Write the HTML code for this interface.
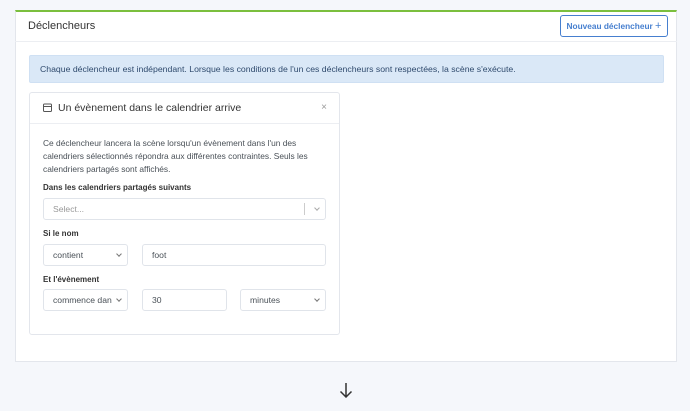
<!DOCTYPE html>
<html><head><style>
*{box-sizing:border-box;margin:0;padding:0}
body{width:690px;height:411px;background:#f5f7fb;font-family:"Liberation Sans",sans-serif;color:#495057;position:relative;overflow:hidden}
.abs{position:absolute}
.card{left:15px;top:10px;width:662px;height:352px;background:#fff;border:1px solid #e3e6ec;border-top:2px solid #7bbf3e}
.hdr{left:-1px;top:0;width:662px;height:30px;border-bottom:1px solid #eceef2}
.btn{left:545px;top:3px;width:108px;height:22px;border:1px solid #467fcf;border-radius:3px;color:#467fcf;font-size:8.3px;font-weight:bold;line-height:20px;text-align:center;white-space:nowrap}
.alert{left:13px;top:43px;width:635px;height:28px;background:#dae8f7;border:1px solid #cfe0f3;border-radius:2px;font-size:8.7px;color:#2f4a6d;line-height:26px;padding-left:10px;white-space:nowrap}
.ic{left:13px;top:80px;width:311px;height:243px;border:1px solid #e3e6ec;border-radius:3px}
.ih{left:0;top:0;width:100%;height:31px;border-bottom:1px solid #eceef2;font-size:10.5px;color:#333;line-height:30px;padding-left:28px}
.p{font-size:8.4px;line-height:13px;color:#495057}
.lbl{font-size:8px;font-weight:bold;color:#333}
.in{border:1px solid #e0e4ea;border-radius:3px;height:22px;font-size:8.6px;line-height:20px;padding-left:9px;color:#495057;background:#fff}
.chev{position:absolute;right:6px;top:7px;width:4px;height:4px;border-right:1px solid #777;border-bottom:1px solid #777;transform:rotate(45deg)}
</style></head><body>
<div class="abs card">
 <div class="abs hdr"><span class="abs" style="left:13px;top:8px;font-size:11px;color:#333">Déclencheurs</span>
 <div class="abs btn">Nouveau déclencheur <span style="font-size:11px;font-weight:normal">+</span></div></div>
 <div class="abs alert">Chaque déclencheur est indépendant. Lorsque les conditions de l'un ces déclencheurs sont respectées, la scène s'exécute.</div>
 <div class="abs ic">
  <div class="abs ih">Un évènement dans le calendrier arrive
   <svg class="abs" style="left:13px;top:10px" width="9" height="9" viewBox="0 0 9 9"><rect x="0.5" y="1" width="8" height="7.5" rx="1" fill="none" stroke="#555"/><line x1="0.5" y1="3.5" x2="8.5" y2="3.5" stroke="#555"/></svg>
   <span class="abs" style="right:12px;top:0;color:#999;font-size:10px">×</span></div>
  <div class="abs p" style="left:13px;top:44px;width:285px">Ce déclencheur lancera la scène lorsqu'un évènement dans l'un des calendriers sélectionnés répondra aux différentes contraintes. Seuls les calendriers partagés sont affichés.</div>
  <div class="abs lbl" style="left:13px;top:90px">Dans les calendriers partagés suivants</div>
  <div class="abs in" style="left:13px;top:105px;width:283px;color:#999">Select...<span class="abs" style="right:20px;top:4px;height:12px;border-left:1px solid #ccc"></span><span class="chev" style="right:6px;border-color:#aaa"></span></div>
  <div class="abs lbl" style="left:13px;top:136px">Si le nom</div>
  <div class="abs in" style="left:13px;top:151px;width:85px">contient<span class="chev"></span></div>
  <div class="abs in" style="left:112px;top:151px;width:184px">foot</div>
  <div class="abs lbl" style="left:13px;top:182px">Et l'évènement</div>
  <div class="abs in" style="left:13px;top:196px;width:85px">commence dan<span class="chev"></span></div>
  <div class="abs in" style="left:112px;top:196px;width:85px">30</div>
  <div class="abs in" style="left:210px;top:196px;width:86px">minutes<span class="chev"></span></div>
 </div>
</div>
<svg class="abs" style="left:339px;top:382px" width="14" height="16" viewBox="0 0 14 16"><path d="M7 1V15M1.5 9.5L7 15L12.5 9.5" fill="none" stroke="#333" stroke-width="1.5"/></svg>
</body></html>
